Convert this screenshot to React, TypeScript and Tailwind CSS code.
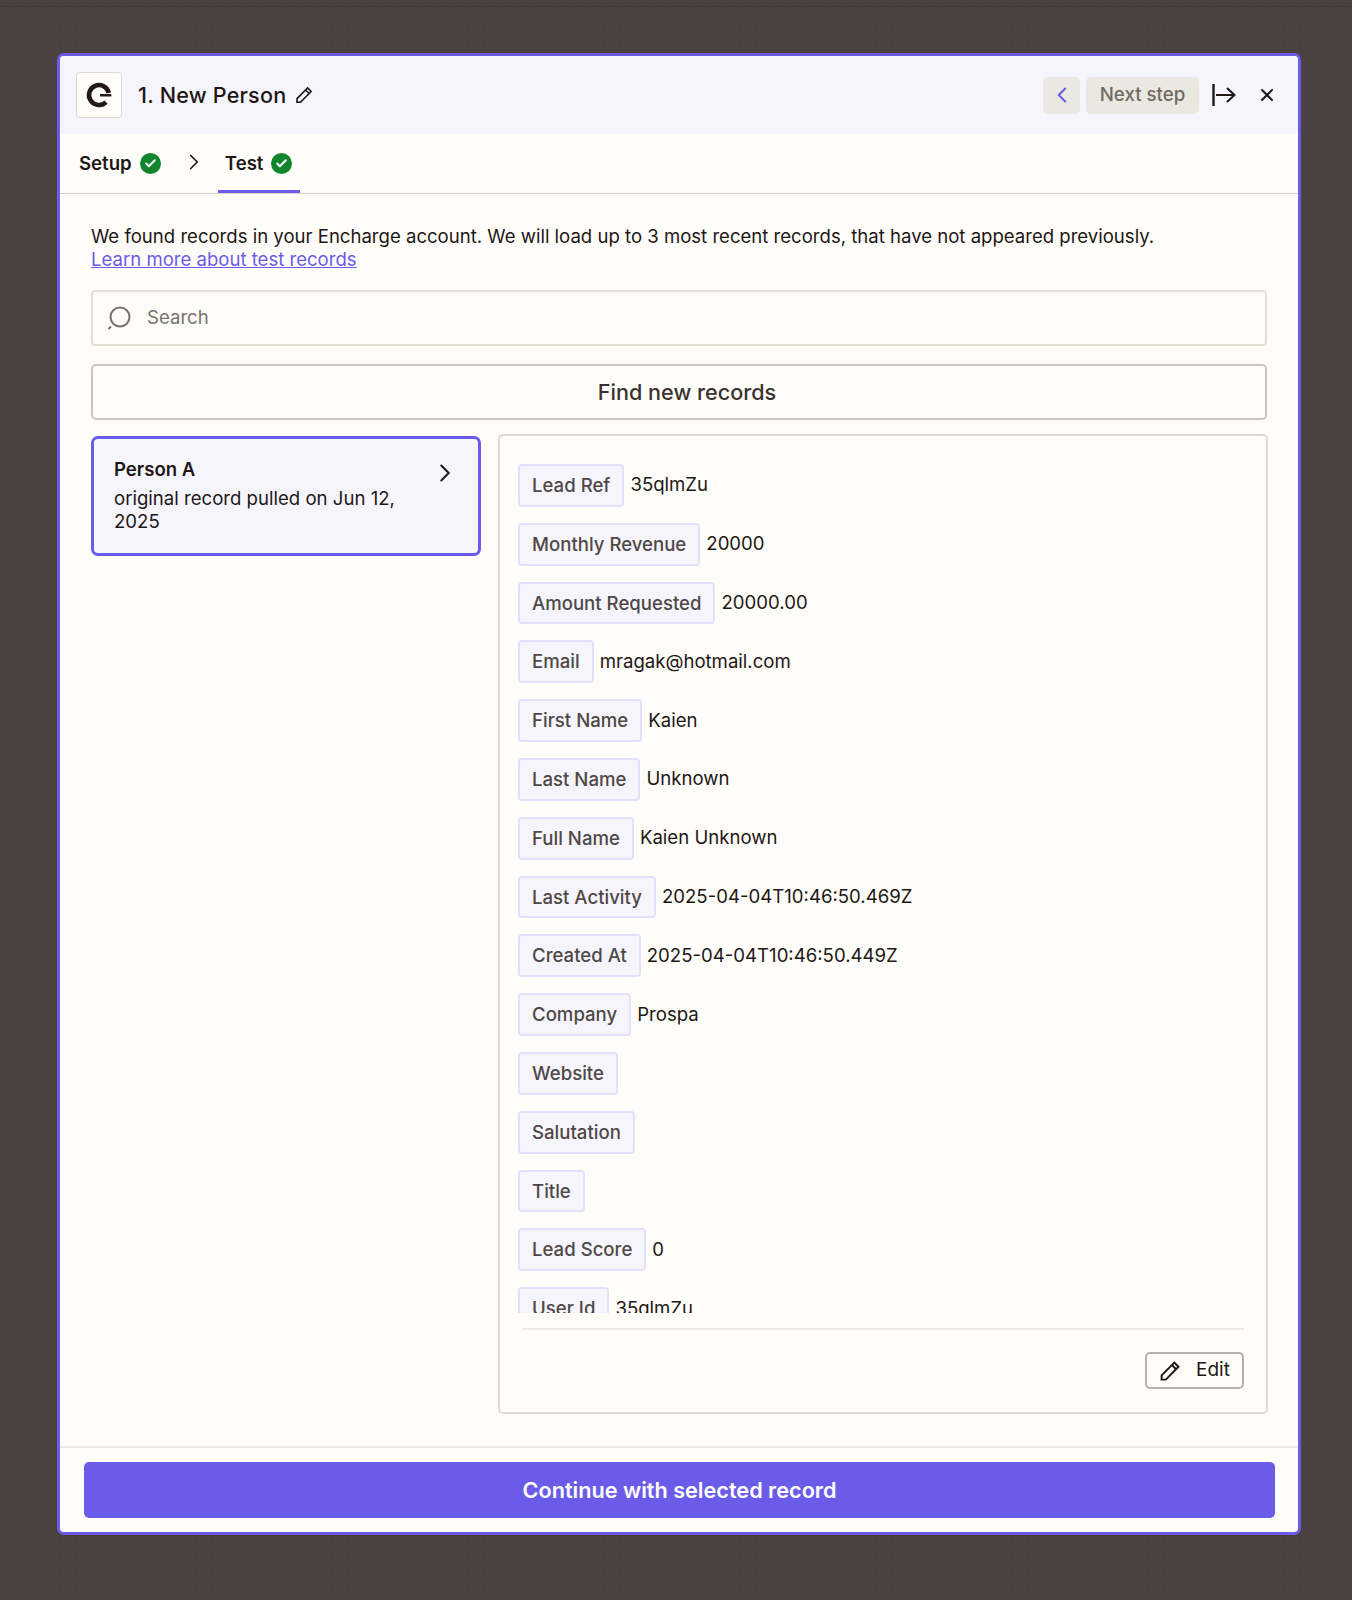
import { ChevronLeft, ChevronRight, Check, X } from "lucide-react";

const fields = [
  { label: "Lead Ref", value: "35qlmZu" },
  { label: "Monthly Revenue", value: "20000" },
  { label: "Amount Requested", value: "20000.00" },
  { label: "Email", value: "mragak@hotmail.com" },
  { label: "First Name", value: "Kaien" },
  { label: "Last Name", value: "Unknown" },
  { label: "Full Name", value: "Kaien Unknown" },
  { label: "Last Activity", value: "2025-04-04T10:46:50.469Z" },
  { label: "Created At", value: "2025-04-04T10:46:50.449Z" },
  { label: "Company", value: "Prospa" },
  { label: "Website", value: "" },
  { label: "Salutation", value: "" },
  { label: "Title", value: "" },
  { label: "Lead Score", value: "0" },
  { label: "User Id", value: "35qlmZu" },
];

function Pencil({ className }: { className: string }) {
  return (
    <svg viewBox="0 0 20 20" fill="none" stroke="currentColor" strokeWidth="1.6" className={className}>
      <path d="M3 17.2v-3.6L13.6 3l3.5 3.5L6.5 17.2H3Z" strokeLinejoin="miter" />
      <path d="M11.6 5l3.5 3.5" />
    </svg>
  );
}

function CheckBadge() {
  return (
    <span className="flex h-[21px] w-[21px] items-center justify-center rounded-full bg-[#12862f] text-white">
      <Check className="h-[13px] w-[13px]" strokeWidth={3.5} />
    </span>
  );
}

export default function App() {
  return (
    <div className="h-[1600px] w-[1352px] overflow-hidden bg-[#4b4140] bg-[radial-gradient(circle,#463c3b_1px,transparent_1.2px)] bg-[length:17px_17px] pl-[57px] font-['Inter',sans-serif] text-[#1e1715]">
      <div className="-ml-[57px] h-[7px] w-[1352px] border-b border-[#433a39]" />
      <div className="mt-[46px] flex h-[1482px] w-[1244px] flex-col overflow-hidden rounded-[7px] border-[3px] border-[#6a5ce8] bg-[#fffdf9]">
        {/* Header */}
        <div className="flex h-[78px] shrink-0 items-center bg-[#f6f5fe] pl-[16px] pr-[21px]">
          <div className="flex h-[46px] w-[46px] items-center justify-center rounded-[4px] border border-[#dcd9d0] bg-[#fffdf9]">
            <svg viewBox="0 0 28 28" className="h-[28px] w-[28px]" fill="none">
              <path d="M21 21.2A10 10 0 1 1 23.8 12" stroke="#231815" strokeWidth="4.6" />
              <path d="M15 13H26.3V15.4H15Z" fill="#231815" />
            </svg>
          </div>
          <span className="ml-[16px] text-[21.6px] font-medium tracking-[0.2px]">1. New Person</span>
          <Pencil className="ml-[8px] h-[20px] w-[20px]" />
          <div className="ml-auto flex items-center">
            <button className="flex h-[37px] w-[37px] items-center justify-center rounded-[5px] bg-[#ebe8e1] text-[#6a5ce8]">
              <ChevronLeft className="h-[26px] w-[26px]" strokeWidth={1.8} />
            </button>
            <button className="ml-[6px] flex h-[37px] w-[113px] items-center justify-center rounded-[5px] bg-[#ebe8e1] pt-[1px] text-[18.7px] font-medium text-[#6f6a65]">
              Next step
            </button>
            <svg viewBox="0 0 24 24" className="ml-[13px] h-[24px] w-[24px]" fill="none" stroke="#1e1715" strokeWidth="2">
              <path d="M1.5 1v22" strokeWidth="2.4" />
              <path d="M4 12h18M15 5l7.5 7-7.5 7" />
            </svg>
            <X className="ml-[21px] h-[20px] w-[20px]" strokeWidth={2.4} />
          </div>
        </div>

        {/* Tabs */}
        <div className="flex h-[60px] shrink-0 items-stretch border-b border-[#d5d2cb]">
          <div className="ml-[19px] flex items-center gap-[8px] text-[18.6px] font-semibold">
            Setup
            <CheckBadge />
          </div>
          <ChevronRight className="ml-[20px] mt-[15px] h-[26px] w-[26px]" strokeWidth={1.6} />
          <div className="ml-[11px] flex w-[82px] items-center justify-center gap-[8px] border-b-[3px] border-[#6a5ce8] pt-[3px] text-[18.6px] font-semibold">
            Test
            <CheckBadge />
          </div>
        </div>

        {/* Body */}
        <div className="flex min-h-0 flex-1 flex-col px-[31px] pt-[31px]">
          <p className="text-[18.57px] leading-[23px]">
            We found records in your Encharge account. We will load up to 3 most recent records, that have not appeared previously.
            <br />
            <a className="text-[#6a5ce8] underline">Learn more about test records</a>
          </p>

          <div className="mt-[19px] flex h-[56px] w-[1176px] items-center rounded-[4px] border-2 border-[#e3e0d8] pl-[13px]">
            <svg viewBox="0 0 26 26" className="h-[26px] w-[26px]" fill="none" stroke="#77716c" strokeWidth="2">
              <circle cx="14" cy="12" r="9.5" />
              <path d="M5 21.5l-2.5 2.5" />
            </svg>
            <span className="ml-[15px] text-[18.6px] text-[#77716c]">Search</span>
          </div>

          <button className="mt-[18px] h-[56px] w-[1176px] rounded-[5px] border-2 border-[#c9c6bf] pl-[16px] text-[21.6px] font-medium text-[#3a3230]">
            Find new records
          </button>

          <div className="mt-[14px] flex items-start">
            <div className="mt-[2px] flex h-[120px] w-[390px] shrink-0 justify-between rounded-[7px] border-[3px] border-[#6a5ce8] bg-[#f6f5fe] pl-[20px] pr-[18px] pt-[18px]">
              <div className="w-[300px]">
                <div className="text-[18.6px] font-semibold leading-[24px]">Person A</div>
                <div className="mt-[6px] text-[18.6px] leading-[23px]">original record pulled on Jun 12, 2025</div>
              </div>
              <ChevronRight className="mt-[1px] h-[30px] w-[30px]" strokeWidth={1.6} />
            </div>

            <div className="ml-[17px] flex h-[980px] w-[770px] shrink-0 flex-col rounded-[5px] border-2 border-[#dddad2] pl-[18px] pr-[22px]">
              <div className="mt-[28px] flex h-[849px] flex-col gap-[16px] overflow-hidden">
                {fields.map((f) => (
                  <div key={f.label} className="flex shrink-0 items-center gap-[6px]">
                    <span className="flex h-[42.8px] items-center rounded-[4px] border-2 border-[#e3e0fb] bg-[#f6f5fe] px-[12px] pt-[1px] text-[18.6px] font-medium text-[#4f4845]">
                      {f.label}
                    </span>
                    <span className="text-[18.6px]">{f.value}</span>
                  </div>
                ))}
              </div>
              <div className="ml-[5px] mt-[15px] h-[2px] bg-[#ebe9e3]" />
              <div className="mt-[22px] flex justify-end">
                <button className="flex h-[37px] w-[99px] items-center rounded-[5px] border-2 border-[#b5b2ab] pl-[11px] text-[19px]">
                  <Pencil className="h-[24px] w-[24px]" />
                  <span className="ml-[14px]">Edit</span>
                </button>
              </div>
            </div>
          </div>
        </div>

        {/* Footer */}
        <div className="flex h-[86px] shrink-0 flex-col border-t-2 border-[#ebe9e3] pl-[24px] pt-[14px]">
          <button className="h-[56px] w-[1191px] rounded-[5px] bg-[#6a5ce8] text-[21.65px] font-semibold text-[#fffdf9]">
            Continue with selected record
          </button>
        </div>
      </div>
    </div>
  );
}
